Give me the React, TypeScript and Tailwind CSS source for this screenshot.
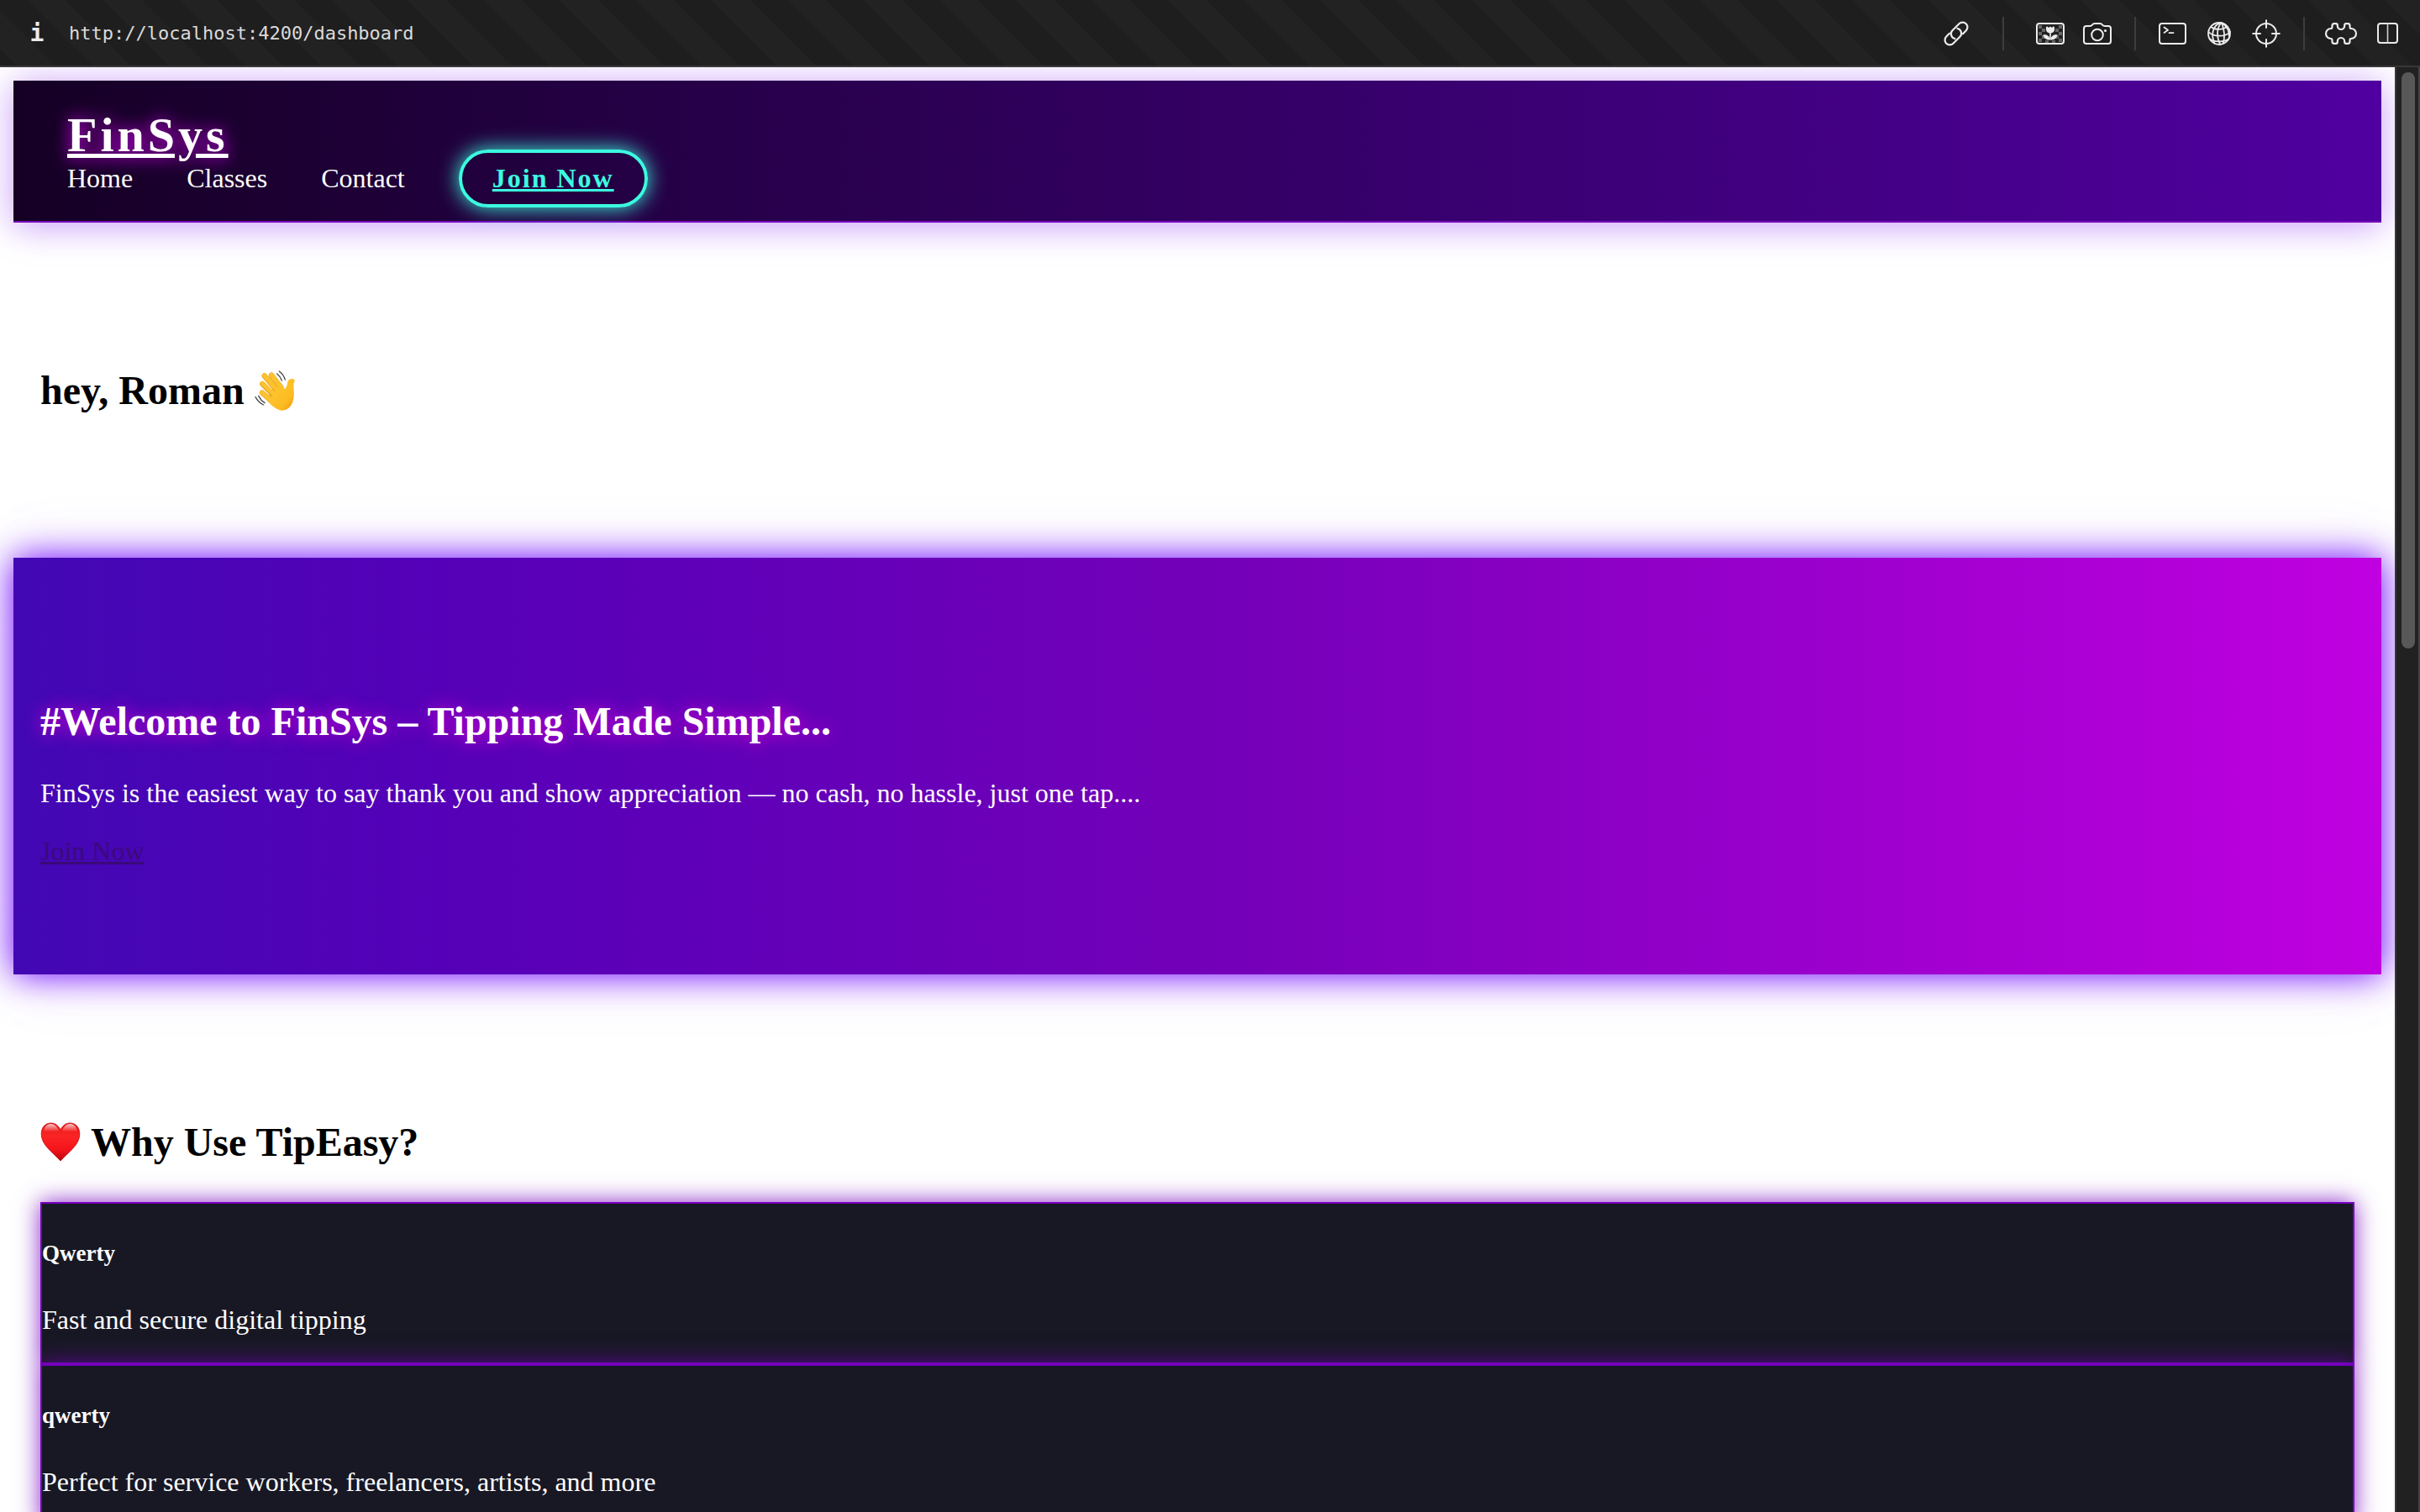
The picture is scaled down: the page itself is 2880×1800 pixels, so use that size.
import React from "react";

function Icon({ children, width = "2.2" }: { children: React.ReactNode; width?: string }) {
  return (
    <svg
      viewBox="0 0 40 40"
      className="size-10"
      fill="none"
      stroke="#ececec"
      strokeWidth={width}
      strokeLinecap="round"
      strokeLinejoin="round"
      aria-hidden="true"
    >
      {children}
    </svg>
  );
}

const squares: [number, number][] = [
  [6, 10], [10, 14], [6, 18], [6, 26], [10, 22],
  [30, 10], [26, 14], [30, 18], [30, 26], [26, 22], [22, 28], [14, 28],
];

const icons = {
  link: (
    <Icon width="2.2">
      <g transform="translate(20 20) rotate(-45)">
        <path d="M-5.500 -5.800 H-10.800 a5.800 5.800 0 0 0 0 11.600 H0.500 a5.800 5.800 0 0 0 4.800 -9" />
        <path d="M5.500 5.800 H10.800 a5.800 5.800 0 0 0 0 -11.600 H-0.500 a5.800 5.800 0 0 0 -4.800 9" />
      </g>
    </Icon>
  ),
  picture: (
    <Icon width="2">
      <g fill="#666666" stroke="none">
        {squares.map(([x, y]) => (
          <rect key={`${x}-${y}`} x={x} y={y} width="4" height="4" />
        ))}
      </g>
      <rect x="4" y="8" width="32" height="24" rx="3" />
      <g fill="#ececec" stroke="none">
        <path d="M15 12 l1.500 -0.500 1.500 1.500 2 -1.500 2 1.500 1.500 -1.500 1.500 0.500 v3.500 a5 4 0 0 1 -10 0 z" />
        <rect x="19.200" y="17" width="1.600" height="10" />
        <path d="M20 27.500 c-5 0 -7.500 -2 -8.500 -6 c4.500 -1 7.500 1.500 8.500 6 z M20 27.500 c5 0 7.500 -2 8.500 -6 c-4.500 -1 -7.500 1.500 -8.500 6 z" />
      </g>
    </Icon>
  ),
  camera: (
    <Icon width="2">
      <path d="M4 14 a3 3 0 0 1 3 -3 h4 q2 0 3 -1.500 q1 -1.500 3 -1.500 h6 q2 0 3 1.500 q1 1.500 3 1.500 h4 a3 3 0 0 1 3 3 v15 a3 3 0 0 1 -3 3 h-26 a3 3 0 0 1 -3 -3 z" />
      <circle cx="20" cy="21.500" r="6.800" />
      <circle cx="29.500" cy="16.500" r="1.600" fill="#ececec" stroke="none" />
    </Icon>
  ),
  terminal: (
    <Icon width="2">
      <rect x="5" y="8" width="31" height="24" rx="3" />
      <path d="M10.500 12.500 l4.500 3.200 -4.500 3.200 M16.500 19.200 h5" strokeWidth="1.800" />
    </Icon>
  ),
  globe: (
    <Icon width="1.800">
      <circle cx="20" cy="20" r="13" />
      <path d="M22 7.200 C12 10 10 22 14.500 31.500 M22.500 7.200 C17 13 16.500 25 21.500 33 M23 7.200 C26 15 27 25 24.500 32 M23.500 7.500 C29 11 32 17 32 24" />
      <path d="M10 12 C15 16 24 16 29.500 11.500 M7.500 18 C13 24 27 24.500 33 18 M8.500 26 C14 30.500 26 30.500 31.500 26" />
    </Icon>
  ),
  target: (
    <Icon width="2">
      <circle cx="20" cy="20" r="12" />
      <path d="M20 4.200 V13 M20 27 V35.800 M4.200 20 H13 M27 20 H35.800" />
    </Icon>
  ),
  puzzle: (
    <Icon>
      <path d="M9.500 10.500 Q9.500 8.200 11.800 8.200 H14 Q15.800 8.200 15.800 10 V10.800 A4.200 4.200 0 0 0 24.200 10.800 V10 Q24.200 8.200 26 8.200 H28.200 Q30.500 8.200 30.500 10.500 V12 Q30.500 14 32 14 A6 6 0 0 1 32 26 Q30.500 26 30.500 28 V29.500 Q30.500 31.800 28.200 31.800 H26 Q24.200 31.800 24.200 30 V29.200 A4.200 4.200 0 0 0 15.800 29.200 V30 Q15.800 31.800 14 31.800 H11.800 Q9.500 31.800 9.500 29.500 V28 Q9.500 26 8 26 A6 6 0 0 1 8 14 Q9.500 14 9.500 12 Z" />
    </Icon>
  ),
  columns: (
    <Icon width="2">
      <rect x="8" y="8" width="23" height="23" rx="3" />
      <path d="M19.500 8 V31" strokeWidth="1.600" stroke="#cfcfcf" />
    </Icon>
  ),
};

function ToolButton({ label, children }: { label: string; children: React.ReactNode }) {
  return (
    <button type="button" aria-label={label} className="flex w-14 shrink-0 items-center justify-center">
      {children}
    </button>
  );
}

function Divider({ wide = false }: { wide?: boolean }) {
  return (
    <div className={wide ? "flex w-14 justify-center" : "flex w-[33px] justify-center"}>
      <div className="h-10 w-0.5 bg-[#3d3d3d]" />
    </div>
  );
}

function BrowserBar() {
  return (
    <div className="flex h-20 shrink-0 items-center border-b-2 border-[#373737] bg-[repeating-linear-gradient(45deg,#1e1e1e_0_14px,#222222_14px_46px,#1e1e1e_46px_64px)] pt-0.5 pr-2.5">
      <button
        type="button"
        aria-label="Page information"
        className="w-[82px] shrink-0 pl-1.5 text-center font-['DejaVu_Sans_Mono',monospace] text-[28px] leading-10 font-bold text-[#ececec]"
      >
        i
      </button>
      <input
        type="text"
        aria-label="Address"
        defaultValue="http://localhost:4200/dashboard"
        className="min-w-0 flex-1 bg-transparent font-['DejaVu_Sans_Mono',monospace] text-[22px] leading-10 text-[#dadada] outline-none"
      />
      <div className="flex items-center">
        <ToolButton label="Copy link">{icons.link}</ToolButton>
        <Divider wide />
        <ToolButton label="Image">{icons.picture}</ToolButton>
        <ToolButton label="Capture">{icons.camera}</ToolButton>
        <Divider />
        <ToolButton label="Console">{icons.terminal}</ToolButton>
        <ToolButton label="Network">{icons.globe}</ToolButton>
        <ToolButton label="Inspect">{icons.target}</ToolButton>
        <Divider />
        <ToolButton label="Extensions">{icons.puzzle}</ToolButton>
        <ToolButton label="Split view">{icons.columns}</ToolButton>
      </div>
    </div>
  );
}

function WavingHand() {
  return (
    <svg viewBox="0 0 144 144" className="size-12" role="img" aria-label="Waving hand">
      <defs>
        <linearGradient id="skin" x1="0" y1="0" x2="1" y2="1">
          <stop offset="0" stopColor="#ffcb32" />
          <stop offset="0.7" stopColor="#fdbb22" />
          <stop offset="1" stopColor="#e8930c" />
        </linearGradient>
      </defs>
      <g stroke="#e09a1a" strokeWidth="19" strokeLinecap="round" fill="none">
        <path d="M60 17 L94 60" />
      </g>
      <g stroke="#fdc22d" strokeWidth="16" strokeLinecap="round" fill="none">
        <path d="M60 17 L96 62" />
      </g>
      <path
        d="M52 84 C62 62 84 52 106 66 C112 62 116 56 117 44 C118 34 126 29 135 30 C143 31 145 36 141 43 C136 53 142 72 140 90 C138 124 122 143 96 143 C80 141 66 130 50 114 C46 108 46 96 52 84 Z"
        fill="url(#skin)"
      />
      <g stroke="#e09a1a" strokeWidth="19" strokeLinecap="round" fill="none">
        <path d="M35 19 L74 64" />
        <path d="M28 48 L62 82" />
        <path d="M27 80 L54 103" />
      </g>
      <g stroke="#fdc22d" strokeWidth="16" strokeLinecap="round" fill="none">
        <path d="M35 18 L82 72" />
        <path d="M28 47 L76 92" />
        <path d="M26 79 L66 112" />
      </g>
      <g stroke="#4a4a4a" strokeWidth="4" strokeLinecap="round" fill="none">
        <path d="M88 3 Q103 14 109 33" />
        <path d="M80 12 Q92 21 97 36" />
        <path d="M3 95 Q14 115 32 123" />
        <path d="M14 91 Q22 107 36 116" />
      </g>
    </svg>
  );
}

function Heart() {
  return (
    <svg viewBox="0 0 48 48" className="size-12" role="img" aria-label="Red heart">
      <defs>
        <linearGradient id="heart" x1="0" y1="0" x2="0" y2="1">
          <stop offset="0" stopColor="#e81a1a" />
          <stop offset="0.35" stopColor="#fa2424" />
          <stop offset="0.7" stopColor="#f5141c" />
          <stop offset="1" stopColor="#b80008" />
        </linearGradient>
        <linearGradient id="gloss" x1="0" y1="0" x2="0" y2="1">
          <stop offset="0" stopColor="#ffffff" stopOpacity="0.75" />
          <stop offset="1" stopColor="#ffffff" stopOpacity="0" />
        </linearGradient>
      </defs>
      <path
        d="M24 9 C21 3 17 1 12.500 1 C6 1 1.200 6 1.200 14 C1.200 27 14 35 24 46 C34 35 46.800 27 46.800 14 C46.800 6 42 1 35.500 1 C31 1 27 3 24 9 Z"
        fill="url(#heart)"
        stroke="#c40a10"
        strokeWidth="0.800"
      />
      <path d="M4 11 C5 4 9 2 12.500 2 C17 2 20 5 22 10 C17 13 9 10 4 11 Z" fill="url(#gloss)" />
      <path d="M44 11 C43 4 39 2 35.500 2 C31 2 28 5 26 10 C31 13 39 10 44 11 Z" fill="url(#gloss)" />
    </svg>
  );
}

function SiteHeader() {
  return (
    <header className="border-b-2 border-[#7700bb] bg-[linear-gradient(90deg,#150024,#5000a0)] px-16 py-8 text-white shadow-[0_4px_40px_rgba(115,0,240,0.4)]">
      <a
        href="#top"
        className="block w-fit text-[58px] leading-[66px] font-bold tracking-[4px] underline [text-shadow:0_0_20px_#e000ff]"
      >
        FinSys
      </a>
      <nav className="flex items-center gap-16">
        <a href="#home">Home</a>
        <a href="#classes">Classes</a>
        <a href="#contact">Contact</a>
        <a
          href="#join"
          className="-my-4 rounded-full border-4 border-[#3cfce0] px-9 py-3 font-bold tracking-[2px] text-[#3cfce0] underline shadow-[0_0_24px_#3cfce0]"
        >
          Join Now
        </a>
      </nav>
    </header>
  );
}

const features = [
  { title: "Qwerty", text: "Fast and secure digital tipping" },
  { title: "qwerty", text: "Perfect for service workers, freelancers, artists, and more" },
];

function Dashboard() {
  return (
    <div className="min-w-0 flex-1 overflow-hidden bg-white p-4 font-['Liberation_Serif',serif] text-[32px] leading-[37px] text-black">
      <SiteHeader />
      <section className="px-8 py-32">
        <h2 className="my-10 flex items-center gap-3 text-5xl leading-[63px] font-bold">
          hey, Roman <WavingHand />
        </h2>
      </section>
      <section className="bg-[linear-gradient(90deg,#4208b4_0%,#5500b8_18%,#7500b9_52%,#c000e0_100%)] px-8 py-32 text-white shadow-[0_0_40px_#6a00ff,0_0_80px_rgba(160,0,220,0.1)]">
        <h2 className="my-10 text-5xl leading-[54px] font-bold [text-shadow:0_0_20px_#e000d0]">
          #Welcome to FinSys – Tipping Made Simple...
        </h2>
        <p className="mb-8">FinSys is the easiest way to say thank you and show appreciation — no cash, no hassle, just one tap....</p>
        <a href="#join" className="block w-fit text-[#3a0a7a] underline">
          Join Now
        </a>
      </section>
      <section className="px-8 py-32">
        <h2 className="my-10 flex items-center gap-3 text-5xl leading-[63px] font-bold">
          <Heart /> Why Use TipEasy?
        </h2>
        {features.map((feature) => (
          <article
            key={feature.title}
            className="border-2 border-[#7500bd] bg-[#181824] text-white shadow-[0_0_26px_rgba(117,0,189,0.85)]"
          >
            <h5 className="mt-11 mb-[45px] text-[27px] leading-[31px] font-bold">{feature.title}</h5>
            <p className="mb-8">{feature.text}</p>
          </article>
        ))}
      </section>
    </div>
  );
}

export default function App() {
  return (
    <div className="flex h-screen flex-col overflow-hidden bg-white">
      <BrowserBar />
      <div className="flex min-h-0 flex-1">
        <Dashboard />
        <div className="w-[30px] shrink-0 border-r-2 border-l-2 border-r-[#444444] border-l-[#373737] bg-[#212121] px-1.5 pt-1.5">
          <div className="h-2/5 w-4 rounded-full bg-[#585858]" />
        </div>
      </div>
    </div>
  );
}
